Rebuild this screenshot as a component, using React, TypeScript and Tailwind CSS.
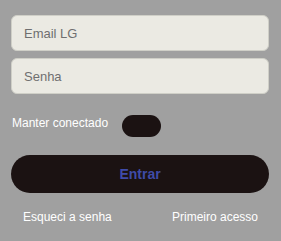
export default function App() {
  return (
    <div className="w-[281px] h-[241px] bg-[#a0a0a0] pl-[11px] pr-[12px] pt-[15px] font-['Liberation_Sans',Arial,sans-serif]">
      <div className="flex flex-col gap-[7px]">
        <input
          type="text"
          placeholder="Email LG"
          className="h-[36px] w-full rounded-[6px] border border-[#cfcfc7] bg-[#ebeae3] px-[12px] text-[13px] text-[#333] placeholder:text-[#6f6f70] outline-none"
        />
        <input
          type="password"
          placeholder="Senha"
          className="h-[36px] w-full rounded-[6px] border border-[#cfcfc7] bg-[#ebeae3] px-[12px] text-[13px] text-[#333] placeholder:text-[#6f6f70] outline-none"
        />
      </div>

      <div className="mt-[21px] flex items-start">
        <span className="pl-[1px] text-[12px] leading-[16px] text-white">Manter conectado</span>
        <button
          type="button"
          aria-label="Manter conectado"
          className="ml-[14px] h-[22px] w-[39px] rounded-full bg-[#1b1212]"
        />
      </div>

      <button
        type="button"
        className="mt-[18px] h-[38px] w-full rounded-full bg-[#1b1212] text-[14px] font-bold text-[#3f4ba8]"
      >
        Entrar
      </button>

      <div className="mt-[16px] flex justify-between pl-[12px] pr-[11px] text-[12px] leading-[16px] text-white">
        <a href="#">Esqueci a senha</a>
        <a href="#">Primeiro acesso</a>
      </div>
    </div>
  );
}
